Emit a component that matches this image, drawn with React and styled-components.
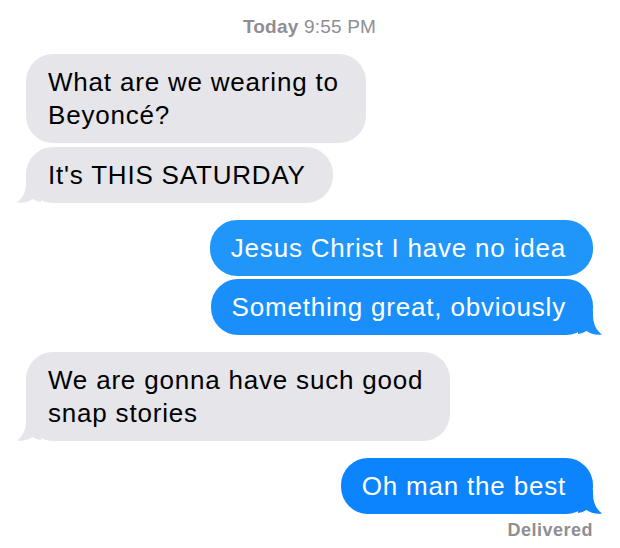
import React from 'react'
import styled, { createGlobalStyle } from 'styled-components'

/*
=============================
styled Components
=============================
*/

const GlobalStyle = createGlobalStyle`
    html, body {
        margin: 0;
        padding: 0;
        background: #ffffff;
    }
    body {
        font-family: "Liberation Sans", Arial, Helvetica, sans-serif;
        -webkit-font-smoothing: antialiased;
    }
`

const Screen = styled.div`
    width: 620px;
    height: 548px;
    box-sizing: border-box;
    padding: 16px 27px 0 26px;
    display: flex;
    flex-direction: column;
    overflow: hidden;
`

const Stamp = styled.div`
    text-align: center;
    font-size: 19px;
    line-height: 22px;
    letter-spacing: 0.2px;
    color: #8e8e93;
    margin-bottom: 16px;
    b {
        font-weight: 700;
    }
`

const Group = styled.div`
    display: flex;
    flex-direction: column;
    align-items: ${props => (props.$mine ? 'flex-end' : 'flex-start')};
    gap: ${props => (props.$mine ? '3px' : '4px')};
    margin-top: ${props => props.$top || 0}px;
`

const Bubble = styled.div`
    position: relative;
    box-sizing: border-box;
    white-space: nowrap;
    padding: 11.5px 27px 11.5px 22px;
    border-radius: 27px;
    font-size: 26px;
    line-height: 33px;
    letter-spacing: 0.8px;
    background: ${props => props.$bg || '#e5e5ea'};
    color: ${props => (props.$mine ? '#ffffff' : '#000000')};
    ${props => props.$mine && 'padding-left: 21px;'}
`

const Line = styled.span`
    display: block;
`

const Tail = styled.svg`
    position: absolute;
    bottom: 0;
    width: 24px;
    height: 24px;
    ${props =>
        props.$mine
            ? 'right: -9px;'
            : 'left: -9px; transform: scaleX(-1);'}
`

const Delivered = styled.div`
    align-self: flex-end;
    margin-top: 6px;
    font-size: 18px;
    line-height: 20px;
    letter-spacing: 0.5px;
    font-weight: 700;
    color: #8e8e93;
`

/*
=============================
Component
=============================
*/

const conversation = [
    {
        mine: false,
        top: 0,
        messages: [
            { lines: ['What are we wearing to', 'Beyoncé?'] },
            { lines: ["It's THIS SATURDAY"] },
        ],
    },
    {
        mine: true,
        top: 17,
        messages: [
            { lines: ['Jesus Christ I have no idea'], bg: '#2196fa' },
            { lines: ['Something great, obviously'], bg: '#1a8ffb' },
        ],
    },
    {
        mine: false,
        top: 17,
        messages: [{ lines: ['We are gonna have such good', 'snap stories'] }],
    },
    {
        mine: true,
        top: 17,
        messages: [{ lines: ['Oh man the best'], bg: '#0b84fe' }],
    },
]

function BubbleTail({ mine, color }) {
    return (
        <Tail $mine={mine} viewBox="0 0 24 24">
            <path
                d="M15 0 L15 4 C15 13 18.5 19.5 24 23.5 C18 24.3 12.5 23 8.5 20 C6 21.5 3 22.5 0 23 L0 0 Z"
                fill={color}
            />
        </Tail>
    )
}

function App() {
    return (
        <>
            <GlobalStyle />
            <Screen>
                <Stamp>
                    <b>Today</b> 9:55 PM
                </Stamp>
                {conversation.map((group, gi) => (
                    <Group key={gi} $mine={group.mine} $top={group.top}>
                        {group.messages.map((m, mi) => {
                            const bg = m.bg || '#e5e5ea'
                            const last = mi === group.messages.length - 1
                            return (
                                <Bubble key={mi} $mine={group.mine} $bg={bg}>
                                    {m.lines.map((l, li) => (
                                        <Line key={li}>{l}</Line>
                                    ))}
                                    {last && <BubbleTail mine={group.mine} color={bg} />}
                                </Bubble>
                            )
                        })}
                    </Group>
                ))}
                <Delivered>Delivered</Delivered>
            </Screen>
        </>
    )
}

export default App
